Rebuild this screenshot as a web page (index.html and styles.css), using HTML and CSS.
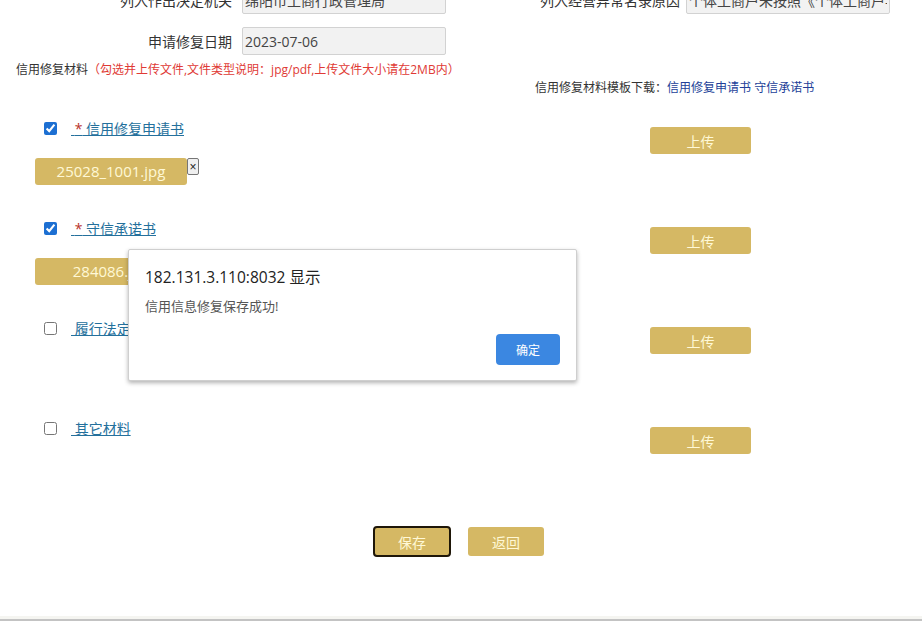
FILE: index.html
```html
<!DOCTYPE html>
<html lang="zh-CN">

<head>
    <meta charset="UTF-8">
    <meta name="viewport" content="width=device-width, initial-scale=1.0">
    <title>信用修复申请</title>

    <link rel="stylesheet" href="styles.css">
</head>

<body>

    <div class="page">

        <div class="form-row first">
            <label class="lbl">列入作出决定机关</label>
            <input class="field" readonly value="绵阳市工商行政管理局">
            <label class="lbl lbl-right">列入经营异常名录原因</label>
            <input class="field" readonly value="个体工商户未按照《个体工商户年度报告暂行办法》规定的期限公示年度报告">
        </div>
        <div class="form-row">
            <label class="lbl">申请修复日期</label>
            <input class="field" readonly value="2023-07-06">
        </div>

        <p class="tip">信用修复材料<span class="tip-red">（勾选并上传文件,文件类型说明：jpg/pdf,上传文件大小请在2MB内）</span></p>
        <p class="template">信用修复材料模板下载：<a href="#">信用修复申请书</a> <a href="#">守信承诺书</a></p>

        <div class="items">
            <div class="item">
                <div class="item-left">
                    <div class="check-line">
                        <input type="checkbox" checked>
                        <a href="#" class="doc-link">&nbsp;<span class="star">*</span> 信用修复申请书</a>
                    </div>
                    <div class="file-line">
                        <span class="chip">25028_1001.jpg</span>
                        <button class="remove">×</button>
                    </div>
                </div>
                <button class="btn upload">上传</button>
            </div>
            <div class="item">
                <div class="item-left">
                    <div class="check-line">
                        <input type="checkbox" checked>
                        <a href="#" class="doc-link">&nbsp;<span class="star">*</span> 守信承诺书</a>
                    </div>
                    <div class="file-line">
                        <span class="chip">284086.jpg</span>
                        <button class="remove">×</button>
                    </div>
                </div>
                <button class="btn upload">上传</button>
            </div>
            <div class="item">
                <div class="item-left">
                    <div class="check-line">
                        <input type="checkbox">
                        <a href="#" class="doc-link">&nbsp;履行法定义务证明材料</a>
                    </div>
                </div>
                <button class="btn upload">上传</button>
            </div>
            <div class="item">
                <div class="item-left">
                    <div class="check-line">
                        <input type="checkbox">
                        <a href="#" class="doc-link">&nbsp;其它材料</a>
                    </div>
                </div>
                <button class="btn upload">上传</button>
            </div>
        </div>

        <div class="actions">
            <button class="btn save">保存</button>
            <button class="btn back">返回</button>
        </div>

        <div class="bottom-edge"></div>

        <div class="dialog">
            <div class="dialog-title">182.131.3.110:8032 显示</div>
            <div class="dialog-msg">信用信息修复保存成功!</div>
            <div class="dialog-foot">
                <button class="ok">确定</button>
            </div>
        </div>

    </div>

</body>

</html>
```

FILE: styles.css
```css
body {
    margin: 0;
    overflow: hidden;
    background-color: #fff;
    color: #333;
    font-family: "Open Sans", "Noto Sans CJK SC", sans-serif;
}

.page {
    position: relative;
    height: 621px;
    display: flex;
    flex-direction: column;
    overflow: hidden;
}

.form-row {
    display: flex;
    align-items: center;
    height: 28px;
    margin-top: 13px;
}

.form-row.first {
    margin-top: -14px;
}

.lbl {
    width: 242px;
    padding-right: 10px;
    box-sizing: border-box;
    text-align: right;
    font-size: 14px;
    color: #333;
}

.lbl-right {
    width: 240px;
    padding-right: 6px;
}

.field {
    width: 204px;
    height: 28px;
    box-sizing: border-box;
    padding: 0 2px;
    border: 1px solid #d2d2d2;
    border-radius: 2px;
    background-color: #f2f2f2;
    color: #444;
    font-family: "Open Sans", "Noto Sans CJK SC", sans-serif;
    font-size: 14px;
    outline: none;
}

.tip {
    margin: 7px 0 0 16px;
    font-size: 12px;
    line-height: 16px;
    color: #333;
}

.tip-red {
    color: #e03a35;
}

.template {
    margin: 2px 0 0 535px;
    font-size: 12px;
    line-height: 16px;
    color: #333;
}

.template a {
    color: #233f98;
    text-decoration: none;
}

.items {
    margin-top: 24px;
}

.item {
    display: flex;
    height: 100px;
}

.item-left {
    width: 615px;
    padding-left: 35px;
}

.check-line {
    display: flex;
    align-items: center;
    height: 17px;
}

.check-line input {
    width: 13px;
    height: 13px;
    margin: 0 14px 0 9px;
    accent-color: #1c6fd2;
}

.doc-link {
    font-size: 14px;
    line-height: 17px;
    color: #24709c;
    text-decoration: underline;
}

.star {
    color: #b8322a;
}

.file-line {
    display: flex;
    align-items: flex-start;
    margin-top: 21px;
}

.chip {
    width: 152px;
    height: 27px;
    line-height: 27px;
    border-radius: 3px;
    background-color: #d5b864;
    color: #fff8d6;
    font-size: 15px;
    text-align: center;
}

.remove {
    width: 12px;
    height: 17px;
    padding: 0;
    border: 1px solid #767676;
    border-radius: 2px;
    background-color: #efefef;
    color: #222;
    font-size: 12px;
    line-height: 14px;
}

.btn {
    border: none;
    border-radius: 3px;
    background-color: #d5b864;
    color: #fff8d6;
    font-family: "Open Sans", "Noto Sans CJK SC", sans-serif;
    font-size: 14px;
    padding: 0;
}

.upload {
    width: 101px;
    height: 27px;
    margin-top: 7px;
}

.actions {
    display: flex;
    justify-content: center;
    align-items: center;
    gap: 17px;
    margin-top: 6px;
    padding-right: 5px;
}

.save {
    width: 78px;
    height: 31px;
    border: 2px solid #1e1608;
    border-radius: 4px;
}

.back {
    width: 76px;
    height: 29px;
}

.bottom-edge {
    margin-top: auto;
    height: 2px;
    border-top: 3px solid #f5f5f1;
    background-color: #c3c3c3;
}

.dialog {
    position: absolute;
    left: 128px;
    top: 249px;
    width: 449px;
    height: 132px;
    box-sizing: border-box;
    padding: 17px 16px 16px 16px;
    border: 1px solid #cfcfcf;
    border-radius: 2px;
    background-color: #fff;
    box-shadow: 0 2px 4px rgba(0, 0, 0, 0.3);
}

.dialog-title {
    font-size: 15.5px;
    line-height: 20px;
    color: #222;
}

.dialog-msg {
    margin-top: 9px;
    font-size: 13px;
    line-height: 20px;
    color: #555;
}

.dialog-foot {
    display: flex;
    justify-content: flex-end;
    margin-top: 18px;
}

.ok {
    width: 64px;
    height: 31px;
    border: none;
    border-radius: 4px;
    background-color: #3b87e1;
    color: #fff;
    font-family: "Open Sans", "Noto Sans CJK SC", sans-serif;
    font-size: 12px;
}
```
